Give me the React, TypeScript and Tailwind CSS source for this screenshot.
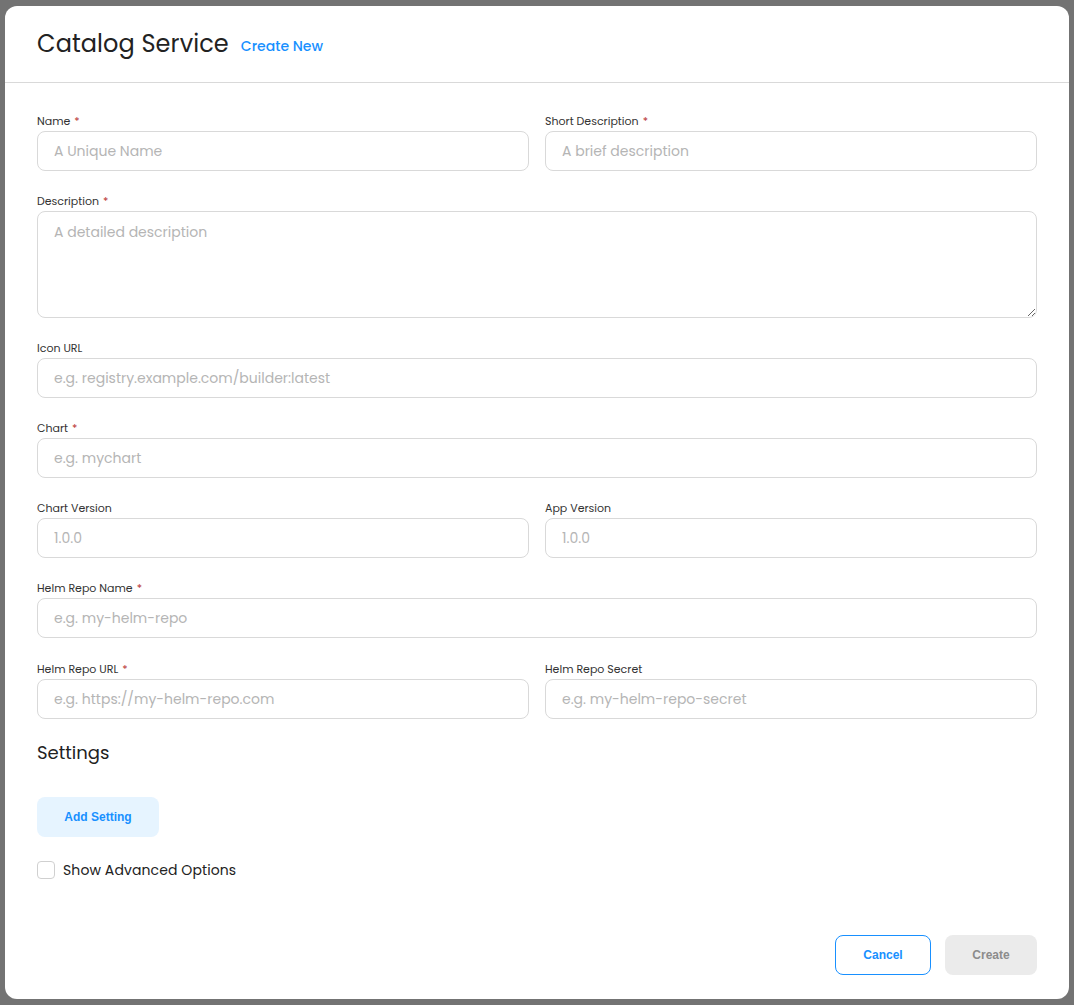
import React from "react";

const font = "font-['Poppins','Inter','Open_Sans',sans-serif]";

function Label({ text, required }: { text: string; required?: boolean }) {
  return (
    <label className="block h-4 mb-[2px] text-[11px] leading-4 text-[#333]">
      {text}
      {required && <span className="ml-1 text-[#b83232]">*</span>}
    </label>
  );
}

function Field({ label, placeholder, required }: { label: string; placeholder: string; required?: boolean }) {
  return (
    <div className="flex-1 min-w-0">
      <Label text={label} required={required} />
      <input
        placeholder={placeholder}
        className="w-full h-10 rounded-lg border border-[#d9d9d9] px-4 text-sm text-[#333] outline-none placeholder:text-[#b5b5b5]"
      />
    </div>
  );
}

export default function App() {
  return (
    <div className={`min-h-screen bg-[#737373] pt-[6px] px-[5px] ${font}`}>
      <div className="h-[993px] bg-white rounded-xl flex flex-col">
        {/* Header */}
        <div className="h-[77px] flex items-center gap-3 px-8 border-b border-[#d9d9d9]">
          <h1 className="text-2xl tracking-[0.1px] text-[#222]">Catalog Service</h1>
          <span className="mt-1 text-sm font-medium text-[#1890ff]">Create New</span>
        </div>

        {/* Body */}
        <div className="px-8 pt-[30px] flex flex-col gap-[22px]">
          <div className="flex gap-4">
            <Field label="Name" placeholder="A Unique Name" required />
            <Field label="Short Description" placeholder="A brief description" required />
          </div>
          <div>
            <Label text="Description" required />
            <textarea
              placeholder="A detailed description"
              className="block w-full h-[107px] rounded-lg border border-[#d9d9d9] px-4 py-[10px] text-sm text-[#333] outline-none resize-y placeholder:text-[#b5b5b5]"
            />
          </div>
          <Field label="Icon URL" placeholder="e.g. registry.example.com/builder:latest" />
          <Field label="Chart" placeholder="e.g. mychart" required />
          <div className="flex gap-4">
            <Field label="Chart Version" placeholder="1.0.0" />
            <Field label="App Version" placeholder="1.0.0" />
          </div>
          <Field label="Helm Repo Name" placeholder="e.g. my-helm-repo" required />
          <div className="flex gap-4 -mt-[1px] pt-[2px]">
            <Field label="Helm Repo URL" placeholder="e.g. https://my-helm-repo.com" required />
            <Field label="Helm Repo Secret" placeholder="e.g. my-helm-repo-secret" />
          </div>
        </div>

        <div className="px-8 mt-[20px]">
          <h2 className="text-lg leading-7 text-[#222]">Settings</h2>
          <button className="mt-[30px] h-10 w-[122px] rounded-lg bg-[#e6f4ff] text-xs font-bold text-[#1890ff] font-['Liberation_Sans',Arial,sans-serif]">
            Add Setting
          </button>
          <label className="mt-[23px] flex items-center gap-2 text-sm tracking-[0.1px] text-[#222]">
            <span className="w-[18px] h-[18px] rounded border border-[#d0d0d0] bg-white" />
            Show Advanced Options
          </label>
        </div>

        {/* Footer */}
        <div className="mt-auto px-8 pb-6 flex justify-end gap-[14px] font-['Liberation_Sans',Arial,sans-serif]">
          <button className="h-10 w-24 rounded-lg border border-[#1890ff] bg-white text-xs font-bold text-[#1890ff]">
            Cancel
          </button>
          <button className="h-10 w-[92px] rounded-lg bg-[#ebebeb] text-xs font-bold text-[#8c8c8c]">
            Create
          </button>
        </div>
      </div>
    </div>
  );
}
